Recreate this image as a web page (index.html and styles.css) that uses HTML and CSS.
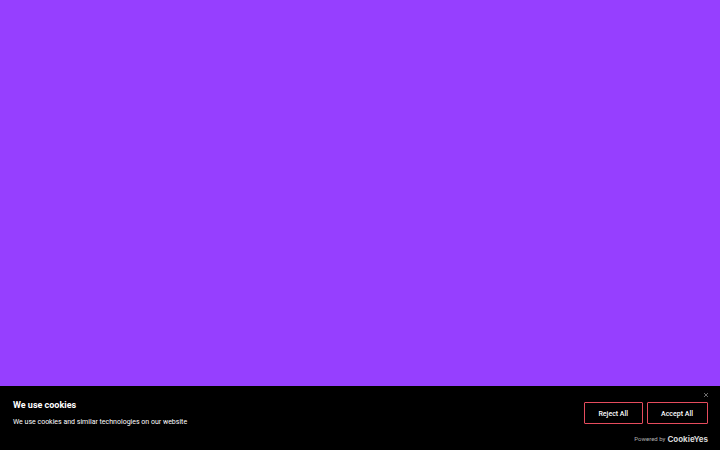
FILE: index.html
```html
<!DOCTYPE html>
<html lang="en">
<head>
<meta charset="utf-8">
<meta name="viewport" content="width=device-width, initial-scale=1">
<title>We use cookies</title>
<link rel="stylesheet" href="styles.css">
</head>
<body>
<main class="page"></main>
<section class="banner" aria-labelledby="banner-title">
  <button class="close" type="button" aria-label="Close">
    <svg viewBox="0 0 6 6" aria-hidden="true"><path d="M1 1l4 4M5 1L1 5"/></svg>
  </button>
  <div class="notice">
    <div class="copy">
      <h2 class="title" id="banner-title">We use cookies</h2>
      <p class="text">We use cookies and similar technologies on our website</p>
    </div>
    <div class="actions">
      <button class="btn" type="button">Reject All</button>
      <button class="btn" type="button">Accept All</button>
    </div>
  </div>
  <footer class="powered">Powered by <span class="brand">CookieYes</span></footer>
</section>
</body>
</html>
```

FILE: styles.css
```css
* {
  box-sizing: border-box;
}

body {
  margin: 0;
  min-height: 100vh;
  display: flex;
  flex-direction: column;
  background: #963fff;
  color: #fff;
  font-family: Roboto, "Liberation Sans", sans-serif;
}

.page {
  flex: 1;
}

.banner {
  position: relative;
  padding: 12px 12px 6px 13px;
  background: #000;
}

.close {
  position: absolute;
  top: 6px;
  right: 11px;
  display: flex;
  padding: 0;
  border: 0;
  background: none;
}

.close svg {
  width: 6px;
  height: 6px;
  fill: none;
  stroke: #999;
  stroke-width: 0.7;
}

.notice {
  display: flex;
  justify-content: space-between;
  align-items: flex-start;
  gap: 16px;
}

.title {
  margin: 0 0 4px;
  font-size: 9px;
  line-height: 14px;
  font-weight: 700;
}

.text {
  margin: 0;
  font-size: 7px;
  line-height: 12px;
}

.actions {
  display: flex;
  gap: 4px;
  padding-top: 4px;
}

.btn {
  height: 22px;
  padding: 1px 14px 0 13px;
  border: 1px solid #e64c5d;
  border-radius: 1px;
  background: #000;
  color: #fff;
  font: 500 7px/12px Roboto, "Liberation Sans", sans-serif;
}

.powered {
  display: flex;
  justify-content: flex-end;
  align-items: center;
  gap: 2px;
  margin-top: 6px;
  color: #b0b0b0;
  font-size: 6px;
  line-height: 10px;
}

.brand {
  color: #d5d5d5;
  font-family: Inter, "Liberation Sans", sans-serif;
  font-size: 8px;
  font-weight: 700;
}
```
